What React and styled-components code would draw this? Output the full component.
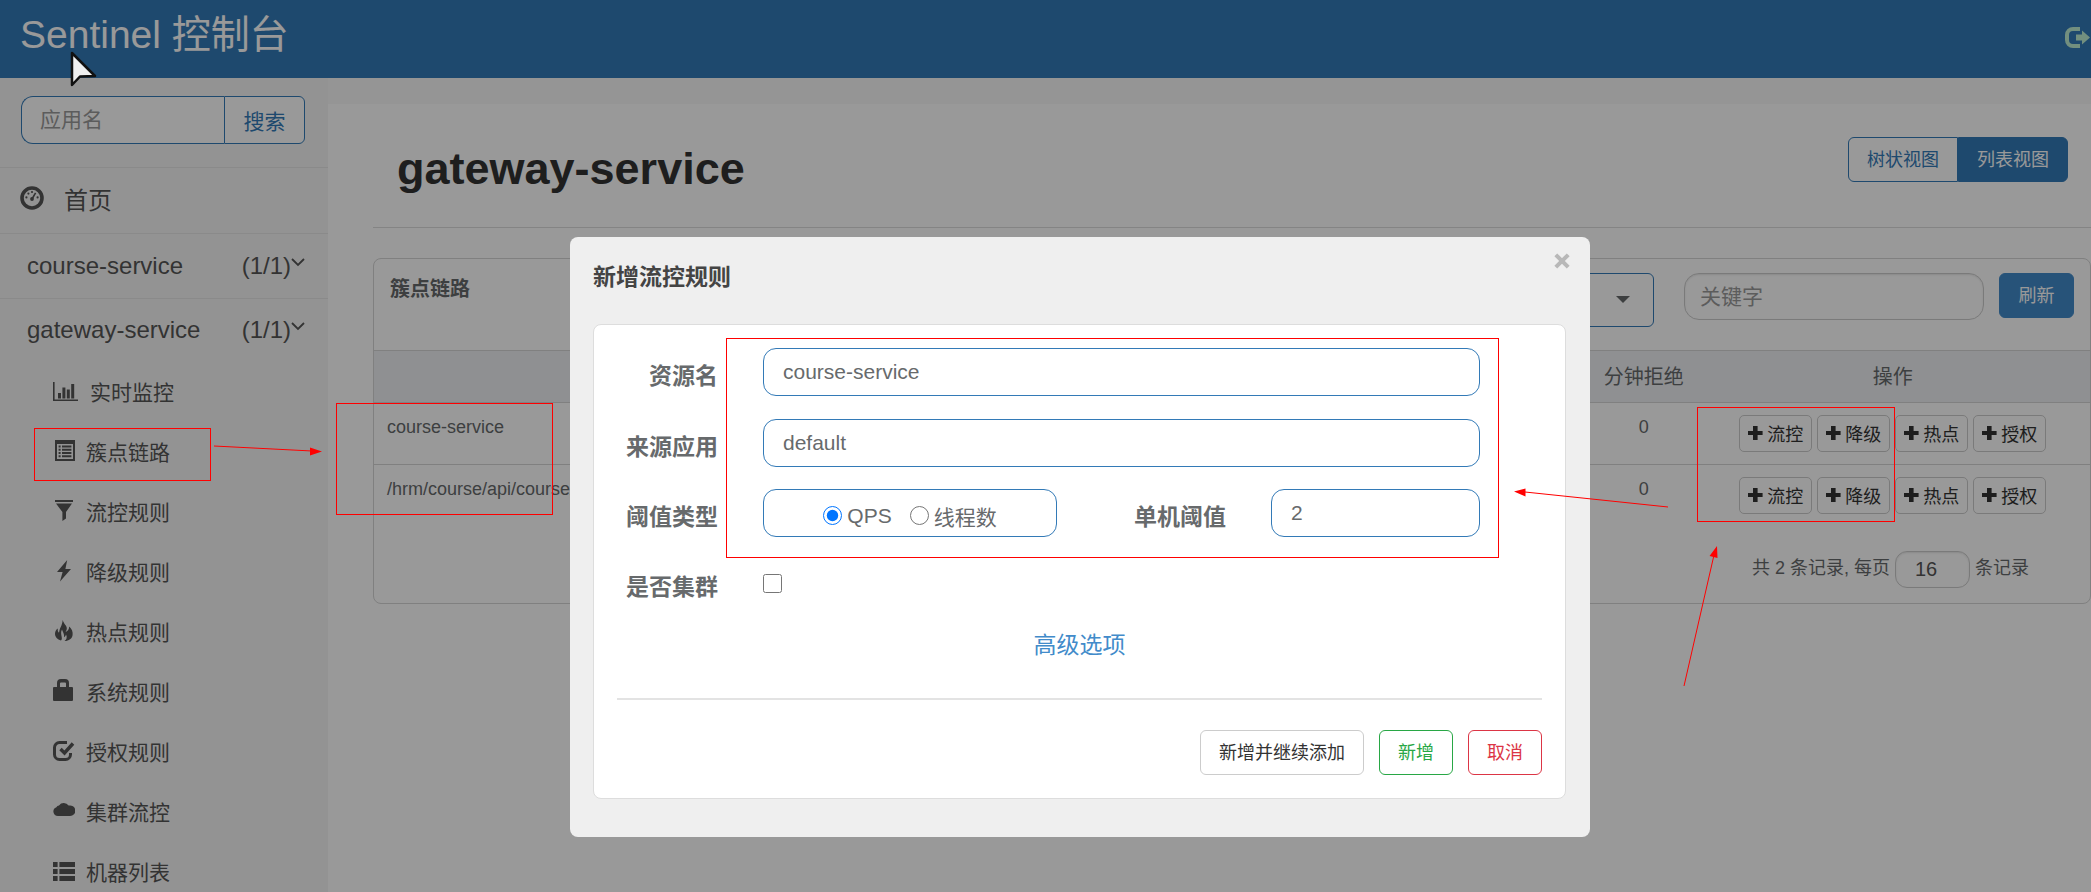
import React, { useState } from 'react';
import styled, { createGlobalStyle, css } from 'styled-components';

const icons = {
  dashboard: (
    <>
      <circle cx="12" cy="12" r="10" fill="none" stroke="currentColor" strokeWidth="3.6" />
      <circle cx="6.4" cy="11.4" r="1.1" />
      <circle cx="8.4" cy="7.6" r="1.1" />
      <circle cx="12" cy="6" r="1.1" />
      <circle cx="17.6" cy="11.4" r="1.1" />
      <circle cx="12" cy="13" r="1.9" />
      <path d="M12 13L15.6 6.8" stroke="currentColor" strokeWidth="1.6" />
    </>
  ),
  chart: (
    <path d="M0 3h1.6v17.4H25V22H0zM5 14h3v5.4H5zM9.4 8.4h3v11h-3zM13.8 10.6h3v8.8h-3zM18.2 5h3v14.4h-3z" />
  ),
  listAlt: (
    <path
      fillRule="evenodd"
      d="M2 1h20v21H2zM4 5v15h16V5zM5.6 6.6h2v2h-2zM9 6.6h9.4v2H9zM5.6 9.8h2v2h-2zM9 9.8h9.4v2H9zM5.6 13h2v2h-2zM9 13h9.4v2H9zM5.6 16.2h2v2h-2zM9 16.2h9.4v2H9z"
    />
  ),
  filter: <path d="M2 1h18v2H2zM3 4.6h16l-6 8.4v6.4L9.4 22v-9z" />,
  flash: <path d="M14.2 1L4 13h5.600L7 22.400 18 10h-5.600z" />,
  fire: (
    <path d="M9.8 1c.8 4 4.2 5.5 4 8.5 0 1.5-.8 2.5-1.2 3.5 1.900-.6 3.400-2.200 3.600-5.500 2.800 2.500 3.800 5.500 3.400 8.500-.4 3.500-3.600 6-8.100 6 2.300-1.500 2.800-4 1.500-6.500-.4 1.500-1.100 2.300-2 2.700.6-3.200-1.400-5.200-2-7.700-1.400 2-.8 5-.4 7 .4 1.800.4 3.300-.6 3.900C4.400 20.600 2 18.200 2 14.800c0-2.600 1.400-4.200 2.800-5.200-.2 2.200.2 3.600 1.200 4.200.6-4 1.600-5.200 2.400-7.200.8-2 1-4 1.400-5.600z" />
  ),
  lock: (
    <path
      fillRule="evenodd"
      d="M4 8V4a4 4 0 0 1 4-4h4a4 4 0 0 1 4 4v4h3a1 1 0 0 1 1 1v12a1 1 0 0 1-1 1H1a1 1 0 0 1-1-1V9a1 1 0 0 1 1-1zM7 8h6V4.5a1 1 0 0 0-1-1H8a1 1 0 0 0-1 1z"
    />
  ),
  check: (
    <>
      <path
        d="M14 3.500H6.500a5 5 0 0 0-5 5v7a5 5 0 0 0 5 5h6a5 5 0 0 0 5-5V14"
        fill="none"
        stroke="currentColor"
        strokeWidth="3"
      />
      <path d="M7.5 10l4 4L20 4.5" fill="none" stroke="currentColor" strokeWidth="3.4" />
    </>
  ),
  cloud: (
    <path d="M5 17a5 4.6 0 0 1-1.600-8.800A3 3 0 0 1 6 6.400 5.800 5.800 0 0 1 15.600 6.600 5.300 5.300 0 1 1 17 17z" />
  ),
  list: (
    <path d="M0 3h4.6v5H0zM6.4 3H22v5H6.4zM0 10h4.6v5H0zM6.4 10H22v5H6.4zM0 17h4.6v5H0zM6.4 17H22v5H6.4z" />
  ),
  logout: (
    <path d="M16 1H9a8 8 0 0 0-8 8v5a8 8 0 0 0 8 8h7v-4H9a4 4 0 0 1-4-4V9a4 4 0 0 1 4-4h7zM18 4.5v4h-6v6h6v4l8-7z" />
  ),
  plus: <path d="M5 0h4.6v5h5v4h-5v5H5V9H0V5h5z" />,
  chevron: <path d="M1 1l6 6 6-6" fill="none" stroke="currentColor" strokeWidth="1.8" />,
  caret: <path d="M0 0h14L7 7z" />,
  close: <path d="M1.8 1.8l12.400 12.400M14.200 1.800L1.800 14.200" stroke="currentColor" strokeWidth="4" />,
};

const Icon = ({ type, width = 22, height = 24 }) => (
  <Svg width={width} height={height} viewBox={`0 0 ${width} ${height}`} aria-hidden="true">
    {icons[type]}
  </Svg>
);

const menu = [
  { icon: 'chart', name: '实时监控', width: 26 },
  { icon: 'listAlt', name: '簇点链路' },
  { icon: 'filter', name: '流控规则' },
  { icon: 'flash', name: '降级规则' },
  { icon: 'fire', name: '热点规则' },
  { icon: 'lock', name: '系统规则' },
  { icon: 'check', name: '授权规则' },
  { icon: 'cloud', name: '集群流控' },
  { icon: 'list', name: '机器列表' },
];

const columns = ['资源名', '通过QPS', '拒绝QPS', '线程数', '平均RT', '分钟通过', '分钟拒绝', '操作'];
const resources = ['course-service', '/hrm/course/api/course/'];
const actions = ['流控', '降级', '热点', '授权'];

const Sidebar = () => (
  <Aside>
    <SearchForm>
      <SearchInput placeholder="应用名" aria-label="应用名" />
      <SearchButton type="button">搜索</SearchButton>
    </SearchForm>
    <HomeLink href="#home">
      <Icon type="dashboard" width={24} />
      首页
    </HomeLink>
    <AppLink href="#course-service" $line>
      <span>course-service</span>
      <Count>
        (1/1)
        <Icon type="chevron" width={14} height={16} />
      </Count>
    </AppLink>
    <AppLink href="#gateway-service">
      <span>gateway-service</span>
      <Count>
        (1/1)
        <Icon type="chevron" width={14} height={16} />
      </Count>
    </AppLink>
    <nav>
      {menu.map((item) => (
        <MenuLink key={item.name} href={`#${item.icon}`}>
          <Icon type={item.icon} width={item.width} />
          {item.name}
        </MenuLink>
      ))}
    </nav>
  </Aside>
);

const ResourceTable = () => (
  <Table>
    <colgroup>
      {columns.map((name, i) => (
        <Col key={name} $first={i === 0} $last={i === columns.length - 1} />
      ))}
    </colgroup>
    <thead>
      <tr>
        {columns.map((name) => <Th key={name}>{name}</Th>)}
      </tr>
    </thead>
    <tbody>
      {resources.map((name) => (
        <tr key={name}>
          <Td $left>{name}</Td>
          {columns.slice(1, -1).map((col) => <Td key={col}>0</Td>)}
          <Td>
            <Actions>
              {actions.map((action) => (
                <ActionButton type="button" key={action}>
                  <Icon type="plus" width={15} height={14} />
                  {action}
                </ActionButton>
              ))}
            </Actions>
          </Td>
        </tr>
      ))}
    </tbody>
  </Table>
);

const RuleDialog = () => {
  const [grade, setGrade] = useState('qps');

  return (
    <Dialog role="dialog" aria-labelledby="dialog-title">
      <DialogHeader>
        <DialogTitle id="dialog-title">新增流控规则</DialogTitle>
        <CloseButton type="button" aria-label="关闭">
          <Icon type="close" width={16} height={16} />
        </CloseButton>
      </DialogHeader>
      <Card>
        <FormRow>
          <Label htmlFor="resource">资源名</Label>
          <Field id="resource" defaultValue="course-service" />
        </FormRow>
        <FormRow>
          <Label htmlFor="limit-app">来源应用</Label>
          <Field id="limit-app" defaultValue="default" />
        </FormRow>
        <FormRow>
          <Label as="span" id="grade-label">阈值类型</Label>
          <RadioBox role="radiogroup" aria-labelledby="grade-label">
            <RadioLabel>
              <Choice type="radio" name="grade" checked={grade === 'qps'} onChange={() => setGrade('qps')} />
              QPS
            </RadioLabel>
            <RadioLabel>
              <Choice type="radio" name="grade" checked={grade === 'thread'} onChange={() => setGrade('thread')} />
              线程数
            </RadioLabel>
          </RadioBox>
          <Label htmlFor="count" $grow>单机阈值</Label>
          <Field id="count" defaultValue="2" $short />
        </FormRow>
        <FormRow>
          <Label htmlFor="cluster">是否集群</Label>
          <Choice type="checkbox" id="cluster" />
        </FormRow>
        <Advanced href="#advanced">高级选项</Advanced>
        <Divider />
        <DialogFooter>
          <OutlineButton type="button">新增并继续添加</OutlineButton>
          <OutlineButton type="button" $color="#28a745">新增</OutlineButton>
          <OutlineButton type="button" $color="#dc3545">取消</OutlineButton>
        </DialogFooter>
      </Card>
    </Dialog>
  );
};

// red marks drawn over the page
const Marks = () => (
  <MarkLayer aria-hidden="true">
    <g fill="none" shapeRendering="crispEdges">
      <rect x="34.5" y="428.5" width="176" height="52" />
      <rect x="336.5" y="403.5" width="216" height="111" />
      <rect x="726.5" y="338.5" width="772" height="219" />
      <rect x="1697.5" y="407.5" width="197" height="114" />
    </g>
    <path d="M214 446L312 451M1668 507L1525 492M1684 686L1714 555" />
    <path d="M322 451.5l-12 -4v8zM1514 491.5l11.5 -3v8zM1717 546l-7.5 10 8 2z" stroke="none" fill="#f00" />
  </MarkLayer>
);

const Pointer = () => (
  <PointerIcon width="30" height="42" viewBox="0 0 30 42" aria-hidden="true">
    <path d="M2 3v32l8-8.5 15-.5z" fill="#f0f0f0" stroke="#111" strokeWidth="2.5" strokeLinejoin="round" />
  </PointerIcon>
);

const App = () => (
  <Page>
    <GlobalStyle />
    <Header>
      <Brand href="#home">Sentinel 控制台</Brand>
      <Logout type="button" aria-label="退出">
        <Icon type="logout" width={27} height={23} />
      </Logout>
    </Header>
    <Body>
      <Sidebar />
      <Main>
        <Heading>
          <h1>gateway-service</h1>
          <Toggle>
            <ToggleButton type="button">树状视图</ToggleButton>
            <ToggleButton type="button" $active>列表视图</ToggleButton>
          </Toggle>
        </Heading>
        <Panel>
          <Toolbar>
            <PanelTitle>簇点链路</PanelTitle>
            <SelectWrap>
              <Select aria-label="机器">
                <option>127.0.0.1:8719</option>
              </Select>
              <Icon type="caret" width={14} height={7} />
            </SelectWrap>
            <Keyword placeholder="关键字" aria-label="关键字" />
            <Refresh type="button">刷新</Refresh>
          </Toolbar>
          <ResourceTable />
          <Pager>
            <label htmlFor="page-size">共 2 条记录, 每页</label>
            <PageSize id="page-size" defaultValue="16" />
            <span>条记录</span>
          </Pager>
        </Panel>
      </Main>
    </Body>
    <Backdrop>
      <RuleDialog />
    </Backdrop>
    <Marks />
    <Pointer />
  </Page>
);

export default App;

const GlobalStyle = createGlobalStyle`
  * {
    box-sizing: border-box;
  }

  body {
    margin: 0;
    background: #fff;
    color: #676a6c;
    font-family: "Liberation Sans", "Noto Sans CJK SC", sans-serif;
    font-size: 18px;
  }

  a {
    text-decoration: none;
  }

  button, input, select {
    margin: 0;
    font-family: inherit;
    color: inherit;
  }
`;

const Svg = styled.svg`
  display: block;
  flex: none;
  fill: currentColor;
`;

const Page = styled.div`
  display: flex;
  flex-direction: column;
  height: 100vh;
  overflow: hidden;
`;

const Header = styled.header`
  display: flex;
  flex: none;
  justify-content: space-between;
  height: 78px;
  padding-left: 20px;
  background: #337ab7;
`;

const Brand = styled.a`
  font-size: 39px;
  line-height: 70px;
  color: #fff;
`;

const Logout = styled.button`
  padding: 0 0 4px;
  border: 0;
  background: none;
  color: #bfeed4;
`;

const Body = styled.div`
  display: flex;
  flex: 1;
  min-height: 0;
`;

const Aside = styled.aside`
  flex: none;
  width: 328px;
  background: #f6f6f6;
  color: #555;
`;

const SearchForm = styled.form`
  display: flex;
  padding: 18px 23px 23px 21px;
  border-bottom: 1px solid #e7e7e7;
`;

const placeholder = css`
  &::placeholder {
    color: #999;
    opacity: 1;
  }
`;

const SearchInput = styled.input`
  flex: 1;
  min-width: 0;
  height: 48px;
  padding: 0 18px;
  border: 1px solid #337ab7;
  border-right: 0;
  border-radius: 12px 0 0 12px;
  background: #fff;
  font-size: 21px;
  ${placeholder}
`;

const SearchButton = styled.button`
  width: 81px;
  height: 48px;
  border: 1px solid #337ab7;
  border-radius: 0 6px 6px 0;
  background: #fff;
  font-size: 21px;
  color: #337ab7;
`;

const HomeLink = styled.a`
  display: flex;
  align-items: center;
  gap: 20px;
  height: 66px;
  padding: 0 20px 5px;
  border-bottom: 1px solid #e7e7e7;
  font-size: 24px;
  color: inherit;
`;

const AppLink = styled.a`
  display: flex;
  align-items: center;
  justify-content: space-between;
  height: ${({ $line }) => ($line ? 65 : 62)}px;
  padding: 0 23px 0 27px;
  border-bottom: ${({ $line }) => ($line ? '1px solid #e7e7e7' : 0)};
  font-size: 24px;
  color: inherit;
`;

const Count = styled.span`
  display: flex;
  align-items: center;
`;

const MenuLink = styled.a`
  display: flex;
  align-items: center;
  gap: 11px;
  height: 60px;
  padding-left: 53px;
  font-size: 21px;
  color: inherit;
`;

const Main = styled.main`
  flex: 1;
  min-width: 0;
  padding-left: 45px;
  border-top: 26px solid #f8f8f8;
`;

const Heading = styled.div`
  display: flex;
  align-items: flex-start;
  justify-content: space-between;
  padding: 33px 23px 26px 24px;
  border-bottom: 1px solid #ddd;

  h1 {
    margin: 0;
    font-size: 45px;
    line-height: 64px;
    color: #333;
  }
`;

const Toggle = styled.div`
  display: flex;
`;

const ToggleButton = styled.button`
  height: 45px;
  padding: 0 18px 3px;
  border: 1px solid #337ab7;
  border-radius: ${({ $active }) => ($active ? '0 6px 6px 0' : '6px 0 0 6px')};
  background: ${({ $active }) => ($active ? '#337ab7' : '#fff')};
  font-size: 18px;
  color: ${({ $active }) => ($active ? '#fff' : '#337ab7')};
`;

const Panel = styled.section`
  margin-top: 30px;
  border: 1px solid #d5d5d5;
  border-radius: 8px;
`;

const Toolbar = styled.div`
  display: flex;
  align-items: flex-start;
  height: 91px;
  padding: 14px 16px;
`;

const PanelTitle = styled.strong`
  flex: 1;
  font-size: 20px;
  line-height: 33px;
`;

const SelectWrap = styled.div`
  position: relative;
  width: 254px;
  margin-right: 30px;

  svg {
    position: absolute;
    top: 23px;
    right: 24px;
  }
`;

const Select = styled.select`
  width: 100%;
  height: 54px;
  padding: 0 18px;
  appearance: none;
  border: 1px solid #337ab7;
  border-radius: 6px;
  background: #fff;
  font-size: 18px;
`;

const Keyword = styled.input`
  width: 300px;
  height: 47px;
  margin-right: 15px;
  padding: 0 15px;
  border: 1px solid #ccc;
  border-radius: 15px;
  box-shadow: inset 0 1px 2px rgba(0, 0, 0, 0.1);
  font-size: 21px;
  ${placeholder}
`;

const Refresh = styled.button`
  width: 75px;
  height: 45px;
  padding: 0 0 3px;
  border: 1px solid #428bca;
  border-radius: 6px;
  background: #428bca;
  font-size: 18px;
  color: #fff;
`;

const Table = styled.table`
  width: 100%;
  table-layout: fixed;
  border-collapse: collapse;
`;

const Col = styled.col`
  width: ${({ $first, $last }) => {
    if ($first) return '41%';
    return $last ? '23%' : '6%';
  }};
`;

const Th = styled.th`
  height: 52px;
  padding: 0 0 3px;
  border-top: 1px solid #d5d5d5;
  background: #eff1f4;
  font-size: 20px;
  font-weight: 400;
  white-space: nowrap;
`;

const Td = styled.td`
  padding: 12px 13px;
  border-top: 1px solid #d5d5d5;
  line-height: 24px;
  text-align: ${({ $left }) => ($left ? 'left' : 'center')};
  vertical-align: top;
`;

const Actions = styled.div`
  display: flex;
  justify-content: center;
  gap: 5px;
`;

const ActionButton = styled.button`
  display: flex;
  align-items: center;
  justify-content: center;
  gap: 4px;
  width: 73px;
  height: 37px;
  padding: 0 0 2px;
  border: 1px solid #ccc;
  border-radius: 5px;
  background: #fff;
  font-size: 18px;
  color: #333;
`;

const Pager = styled.div`
  display: flex;
  justify-content: flex-end;
  gap: 5px;
  padding: 25px 61px 15px;
  font-size: 18px;
  line-height: 35px;
`;

const PageSize = styled.input`
  width: 75px;
  height: 37px;
  padding: 0 19px;
  border: 1px solid #ccc;
  border-radius: 12px;
  box-shadow: inset 0 1px 2px rgba(0, 0, 0, 0.1);
  font-size: 20px;
  color: #555;
`;

const Backdrop = styled.div`
  position: fixed;
  inset: 0;
  display: flex;
  align-items: flex-start;
  justify-content: center;
  padding: 237px 0 0 69px;
  background: rgba(0, 0, 0, 0.4);
`;

const Dialog = styled.div`
  width: 1020px;
  padding: 0 24px 38px 23px;
  border-radius: 8px;
  background: #efefef;
`;

const DialogHeader = styled.div`
  display: flex;
  align-items: flex-start;
  justify-content: space-between;
  height: 87px;
`;

const DialogTitle = styled.h2`
  margin: 24px 0 0;
  font-size: 23px;
  line-height: 32px;
  color: #444;
`;

const CloseButton = styled.button`
  margin: 16px -4px 0 0;
  padding: 0;
  border: 0;
  background: none;
  color: #b8b8b8;
`;

const Card = styled.div`
  padding: 23px;
  border: 1px solid #ddd;
  border-radius: 8px;
  background: #fff;
`;

const FormRow = styled.div`
  display: flex;
  gap: 45px;
  height: 48px;
  margin-bottom: 22px;
  padding-right: 62px;

  &:first-child {
    margin-bottom: 23px;
  }

  input[type='checkbox'] {
    align-self: center;
  }
`;

const Label = styled.label`
  flex: ${({ $grow }) => ($grow ? 1 : 'none')};
  width: 101px;
  padding-top: 8px;
  font-size: 23px;
  font-weight: 700;
  line-height: 40px;
  text-align: right;
  color: #676a6c;
`;

const Field = styled.input`
  flex: ${({ $short }) => ($short ? 'none' : 1)};
  width: ${({ $short }) => ($short ? 209 : 300)}px;
  height: 48px;
  padding: 0 19px;
  border: 1px solid #337ab7;
  border-radius: 13px;
  background: #fff;
  font-size: 21px;
`;

const RadioBox = styled.div`
  display: flex;
  align-items: center;
  justify-content: center;
  gap: 18px;
  width: 294px;
  height: 48px;
  padding-top: 5px;
  border: 1px solid #337ab7;
  border-radius: 13px;
`;

const RadioLabel = styled.label`
  display: flex;
  align-items: center;
  gap: 5px;
  font-size: 21px;
`;

const Choice = styled.input`
  width: 19px;
  height: 19px;
`;

const Advanced = styled.a`
  display: block;
  font-size: 23px;
  line-height: 32px;
  text-align: center;
  color: #428bca;
`;

const Divider = styled.hr`
  height: 2px;
  margin: 37px 0 30px;
  border: 0;
  background: #e3e3e3;
`;

const DialogFooter = styled.div`
  display: flex;
  justify-content: flex-end;
  gap: 15px;
`;

const OutlineButton = styled.button`
  height: 45px;
  padding: 0 18px 3px;
  border: 1px solid ${({ $color }) => $color || '#ccc'};
  border-radius: 6px;
  background: #fff;
  font-size: 18px;
  color: ${({ $color }) => $color || '#333'};
`;

const MarkLayer = styled.svg`
  position: fixed;
  inset: 0;
  width: 100%;
  height: 100%;
  stroke: #f00;
  stroke-width: 1;
  pointer-events: none;
`;

const PointerIcon = styled.svg`
  position: fixed;
  left: 70px;
  top: 50px;
  pointer-events: none;
`;
